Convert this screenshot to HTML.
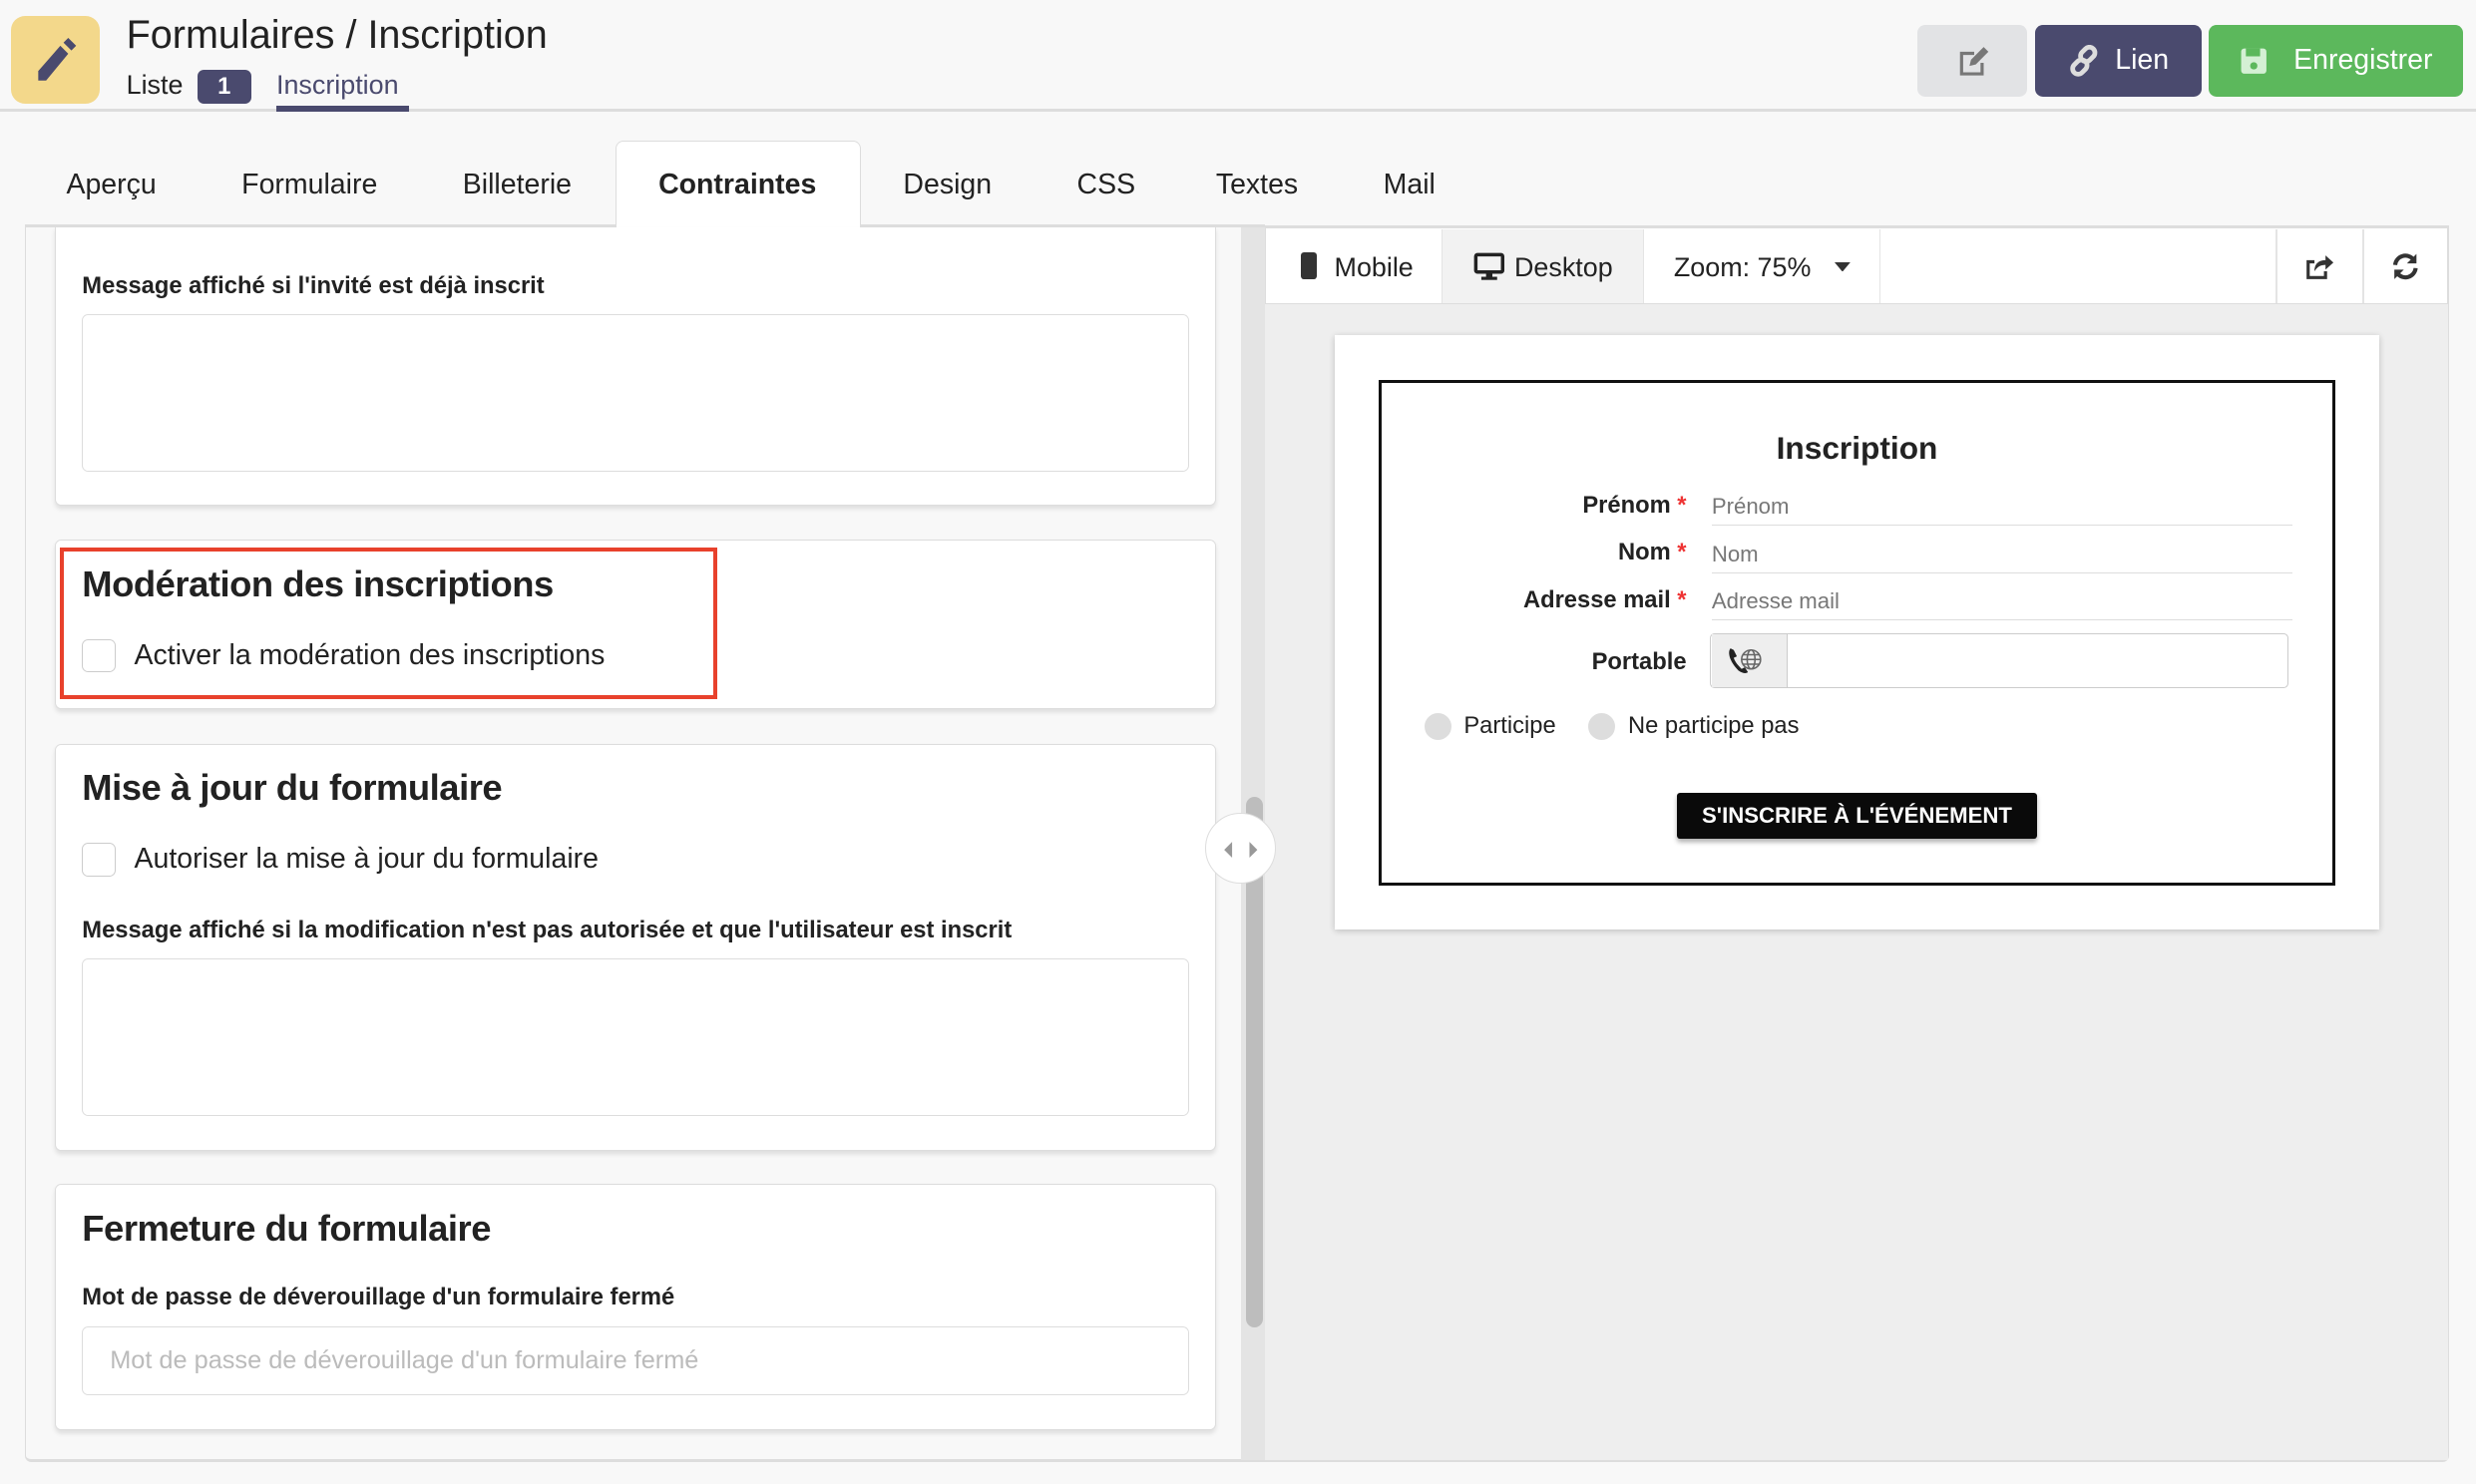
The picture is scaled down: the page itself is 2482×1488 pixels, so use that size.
<!DOCTYPE html>
<html><head><meta charset="utf-8"><style>
*{box-sizing:border-box;margin:0;padding:0}
html,body{width:2482px;height:1488px;overflow:hidden;background:#f8f8f8}
#r{position:relative;width:1568px;height:940px;zoom:1.58291;font-family:"Liberation Sans",sans-serif;color:#222;background:#f8f8f8}
.a{position:absolute}
.btn{position:absolute;border-radius:5px;color:#fff;font-size:18px;display:flex;align-items:center;justify-content:center;gap:10px}
.tab{position:absolute;top:107px;font-size:18px;color:#222}
.card{position:absolute;left:35px;width:735px;background:#fff;border:1px solid #ddd;border-radius:4px;box-shadow:0 2px 3px rgba(0,0,0,.1)}
.h{position:absolute;left:52px;font-size:23px;font-weight:bold;letter-spacing:-.3px}
.lbl{position:absolute;left:52px;font-size:15px;font-weight:bold}
.ta{position:absolute;left:52px;width:701px;border:1px solid #ddd;border-radius:4px;background:#fff}
.cb{position:absolute;left:52px;width:21px;height:21px;border:1px solid #ccc;border-radius:4px;background:#fff}
.cbt{position:absolute;left:85px;font-size:18px}
.fl{position:absolute;font-size:15px;font-weight:bold;text-align:right;width:170px;left:898px}
.fl b{color:#e33;font-weight:bold}
.fi{position:absolute;left:1084px;width:368px;border-bottom:1px solid #ddd;font-size:14px;color:#777;padding-bottom:3px}
</style></head><body><div id="r">
<!-- header -->
<div class="a" style="left:0;top:0;width:1568px;height:71px;border-bottom:2px solid #ddd;background:#f8f8f8"></div>
<div class="a" style="left:7px;top:10px;width:56px;height:56px;background:#f3d88b;border-radius:9px"></div>
<svg class="a" style="left:20px;top:24px" width="30" height="30" viewBox="0 0 30 30"><path d="M4 27 L4 21 L18 5 L23 10 L9 27 Z" fill="#4a4a6e"/><path d="M20 3 L23 0 L28 5 L25 8 Z" fill="#4a4a6e"/></svg>
<div class="a" style="left:80px;top:8px;font-size:25px;color:#222">Formulaires / Inscription</div>
<div class="a" style="left:80px;top:44px;font-size:17px">Liste</div>
<div class="a" style="left:125px;top:44px;width:34px;height:22px;background:#4a4a6e;border-radius:4px;color:#fff;font-size:15px;font-weight:bold;text-align:center;line-height:22px">1</div>
<div class="a" style="left:175px;top:44px;font-size:17px;color:#4a4a6e">Inscription</div>
<div class="a" style="left:175px;top:67px;width:84px;height:4px;background:#4a4a6e"></div>
<div class="btn" style="left:1214px;top:16px;width:70px;height:45px;background:#e2e3e5"><svg width="22" height="22" viewBox="0 0 22 22"><path d="M3 5h9v2H5v11h11v-6h2v8H3z" fill="#777"/><path d="M9 14l1-4 8-8 3 3-8 8z" fill="#777"/></svg></div>
<div class="btn" style="left:1289px;top:16px;width:105px;height:45px;background:#4a4a6e"><svg width="20" height="20" viewBox="0 0 20 20"><g fill="none" stroke="#ddd" stroke-width="3"><rect x="9" y="1" width="7" height="10" rx="3.5" transform="rotate(45 12.5 6)"/><rect x="4" y="9" width="7" height="10" rx="3.5" transform="rotate(45 7.5 14)"/></g></svg><span>Lien</span></div>
<div class="btn" style="left:1399px;top:16px;width:161px;height:45px;background:#5cb85c"><svg width="18" height="18" viewBox="0 0 18 18"><rect x="1" y="1" width="16" height="16" rx="2" fill="#d4f0d4"/><rect x="4" y="1" width="9" height="5" fill="#5cb85c"/><circle cx="9" cy="12" r="2.3" fill="#5cb85c"/></svg><span style="margin-left:6px">Enregistrer</span></div>
<!-- tabs -->
<div class="a" style="left:390px;top:89px;width:155px;height:56px;background:#fff;border:1px solid #ddd;border-bottom:none;border-radius:5px 5px 0 0"></div>
<div class="tab" style="left:42px">Aperçu</div>
<div class="tab" style="left:153px">Formulaire</div>
<div class="tab" style="left:293px">Billeterie</div>
<div class="tab" style="left:417px;font-weight:bold">Contraintes</div>
<div class="tab" style="left:572px">Design</div>
<div class="tab" style="left:682px">CSS</div>
<div class="tab" style="left:770px">Textes</div>
<div class="tab" style="left:876px">Mail</div>
<!-- outer panel -->
<div class="a" style="left:16px;top:143px;width:1535px;height:783px;border:1px solid #ddd;border-top:none;border-bottom:2px solid #ddd;border-radius:0 0 4px 4px"></div>
<div class="a" style="left:16px;top:142px;width:374px;height:2px;background:#ddd"></div>
<div class="a" style="left:545px;top:142px;width:256px;height:2px;background:#ddd"></div>
<!-- scrollbar -->
<div class="a" style="left:786px;top:144px;width:15px;height:781px;background:#e4e4e4"></div>
<div class="a" style="left:789px;top:505px;width:11px;height:336px;background:#bdbdbd;border-radius:6px"></div>
<!-- cards -->
<div class="card" style="top:144px;height:176px;border-top:none;border-radius:0 0 4px 4px"></div>
<div class="a" style="left:74px;top:138px;font-size:15px;height:6px;overflow:hidden;width:300px"></div>
<div class="lbl" style="top:173px">Message affiché si l'invité est déjà inscrit</div>
<div class="ta" style="top:199px;height:100px"></div>
<div class="card" style="top:342px;height:107px"></div>
<div class="a" style="left:38px;top:347px;width:416px;height:96px;border:3px solid #e8412c"></div>
<div class="h" style="top:357px">Modération des inscriptions</div>
<div class="cb" style="top:405px"></div>
<div class="cbt" style="top:405px">Activer la modération des inscriptions</div>
<div class="card" style="top:471px;height:258px"></div>
<div class="h" style="top:486px">Mise à jour du formulaire</div>
<div class="cb" style="top:534px"></div>
<div class="cbt" style="top:534px">Autoriser la mise à jour du formulaire</div>
<div class="lbl" style="top:581px">Message affiché si la modification n'est pas autorisée et que l'utilisateur est inscrit</div>
<div class="ta" style="top:607px;height:100px"></div>
<div class="card" style="top:750px;height:156px"></div>
<div class="h" style="top:765px">Fermeture du formulaire</div>
<div class="lbl" style="top:814px">Mot de passe de déverouillage d'un formulaire fermé</div>
<div class="ta" style="top:840px;height:44px;padding:12px 17px;font-size:16px;color:#bbb">Mot de passe de déverouillage d'un formulaire fermé</div>
<!-- right panel -->
<div class="a" style="left:801px;top:144px;width:749px;height:781px;background:#eee"></div>
<div class="a" style="left:801px;top:143px;width:749px;height:50px;background:#fff;border:1px solid #ddd;border-top:2px solid #ddd"></div>
<div class="a" style="left:913px;top:145px;width:128px;height:47px;background:#f2f2f2;border-left:1px solid #e4e4e4;border-right:1px solid #e4e4e4"></div>
<div class="a" style="left:1190px;top:145px;width:1px;height:47px;background:#e4e4e4"></div>
<div class="a" style="left:1441px;top:145px;width:1px;height:47px;background:#e4e4e4"></div>
<div class="a" style="left:1496px;top:145px;width:1px;height:47px;background:#e4e4e4"></div>
<div class="a" style="left:824px;top:160px;width:10px;height:17px;background:#333;border-radius:2px"></div>
<div class="a" style="left:845px;top:160px;font-size:17px">Mobile</div>
<svg class="a" style="left:933px;top:160px" width="20" height="18" viewBox="0 0 20 18"><rect x="1.5" y="1.5" width="17" height="11" rx="1" fill="none" stroke="#222" stroke-width="2.2"/><rect x="8" y="13" width="4" height="3" fill="#222"/><rect x="5" y="15.5" width="10" height="2" fill="#222"/></svg>
<div class="a" style="left:959px;top:160px;font-size:17px">Desktop</div>
<div class="a" style="left:1060px;top:160px;font-size:17px">Zoom: 75%</div>
<svg class="a" style="left:1162px;top:166px" width="10" height="6"><path d="M0 0h10L5 6z" fill="#333"/></svg>
<svg class="a" style="left:1459px;top:160px" width="19" height="18" viewBox="0 0 19 18"><path d="M2 5h5v2H4v8h9v-3h2v5H2z" fill="#333"/><path d="M7 12 C7 7 10 5 14 5 V2 L19 6.5 L14 11 V8 C11 8 9 9 7 12z" fill="#333"/></svg>
<svg class="a" style="left:1514px;top:160px" width="18" height="18" viewBox="0 0 18 18"><path d="M2.5 8 A6.5 6.5 0 0 1 14 4.5" fill="none" stroke="#333" stroke-width="2.6"/><path d="M16 1v6h-6z" fill="#333"/><path d="M15.5 10 A6.5 6.5 0 0 1 4 13.5" fill="none" stroke="#333" stroke-width="2.6"/><path d="M2 17v-6h6z" fill="#333"/></svg>
<div class="a" style="left:845px;top:212px;width:662px;height:377px;background:#fff;box-shadow:0 1px 4px rgba(0,0,0,.2)"></div>
<div class="a" style="left:873px;top:241px;width:606px;height:320px;border:2px solid #111"></div>
<div class="a" style="left:873px;top:272px;width:606px;text-align:center;font-size:20px;font-weight:bold">Inscription</div>
<div class="fl" style="top:312px">Prénom <b>*</b></div>
<div class="fi" style="top:313px">Prénom</div>
<div class="fl" style="top:342px">Nom <b>*</b></div>
<div class="fi" style="top:343px">Nom</div>
<div class="fl" style="top:372px">Adresse mail <b>*</b></div>
<div class="fi" style="top:373px">Adresse mail</div>
<div class="fl" style="top:411px">Portable</div>
<div class="a" style="left:1083px;top:401px;width:366px;height:35px;border:1px solid #ccc;border-radius:3px;background:#fff"></div>
<div class="a" style="left:1084px;top:402px;width:48px;height:33px;background:#eee;border-right:1px solid #ccc"></div>
<svg class="a" style="left:1093px;top:409px" width="24" height="20" viewBox="0 0 24 20"><path d="M3 2 C1 4 2 10 8 16 C11 18 13 18 14 17 L12 14 L10 15 C8 13 6 11 5 8 L7 7 L5 3z" fill="#222"/><g fill="none" stroke="#666" stroke-width="1"><circle cx="16" cy="9" r="6"/><ellipse cx="16" cy="9" rx="2.5" ry="6"/><path d="M10 9h12M11 6h10M11 12h10"/></g></svg>
<div class="a" style="left:902px;top:452px;width:17px;height:17px;border-radius:50%;background:#ddd"></div>
<div class="a" style="left:927px;top:452px;font-size:15px">Participe</div>
<div class="a" style="left:1006px;top:452px;width:17px;height:17px;border-radius:50%;background:#ddd"></div>
<div class="a" style="left:1031px;top:452px;font-size:15px">Ne participe pas</div>
<div class="a" style="left:1062px;top:502px;width:228px;height:29px;background:#0a0a0a;border-radius:2px;color:#fff;font-size:14px;font-weight:bold;text-align:center;line-height:29px;box-shadow:0 2px 3px rgba(0,0,0,.3)">S'INSCRIRE À L'ÉVÉNEMENT</div>
<!-- splitter handle -->
<div class="a" style="left:763px;top:515px;width:45px;height:45px;border-radius:50%;background:#fff;border:1px solid #ddd"></div>
<svg class="a" style="left:773px;top:531px" width="25" height="14" viewBox="0 0 25 14"><path d="M7 2 L2 7 L7 12Z M18 2 L23 7 L18 12Z" fill="#999"/></svg>
</div></body></html>
